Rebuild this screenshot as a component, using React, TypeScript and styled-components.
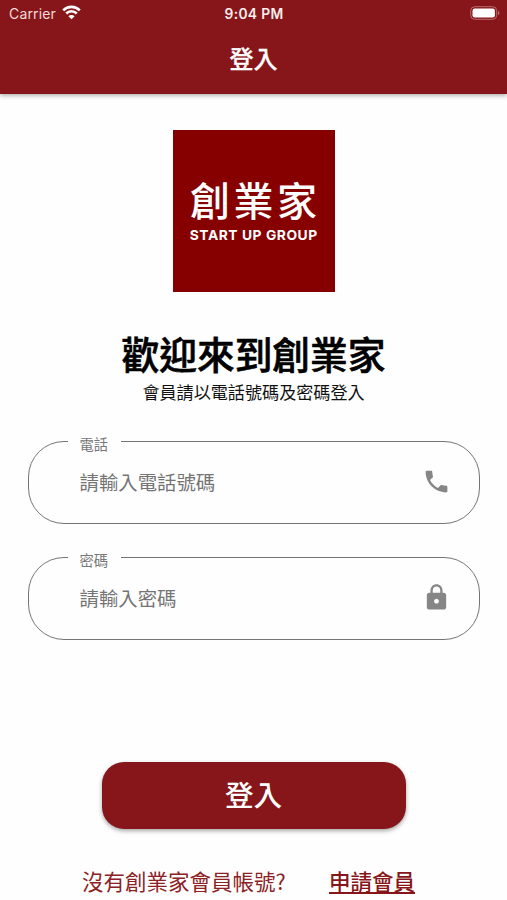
import React from "react";
import styled, { createGlobalStyle } from "styled-components";

const Global = createGlobalStyle`
  * { box-sizing: border-box; }
  body {
    margin: 0;
    background: #fff;
    font-family: Inter, "Noto Sans CJK TC", sans-serif;
  }
`;

const Screen = styled.div`
  display: flex;
  flex-direction: column;
  align-items: center;
  width: 507px;
  height: 900px;
  overflow: hidden;
  background: #fefefe;
`;

const Header = styled.header`
  width: 100%;
  height: 94px;
  flex: none;
  background: #861619;
  color: #fff;
  box-shadow: 0 1px 5px rgba(0, 0, 0, 0.4);
`;

const StatusBar = styled.div`
  display: grid;
  grid-template-columns: 1fr auto 1fr;
  align-items: center;
  height: 27px;
  padding: 0 7px 0 9px;
`;

const Carrier = styled.div`
  display: flex;
  align-items: center;
  gap: 6px;
  font-size: 14px;
  letter-spacing: 0.15px;
  color: #f3dcda;
`;

const Clock = styled.div`
  font-size: 13.8px;
  font-weight: 600;
  letter-spacing: 0.35px;
  margin-right: 1px;
  color: #fdeeee;
`;

const Battery = styled.svg`
  justify-self: end;
  margin-bottom: 1px;
`;

const Title = styled.h1`
  margin: 14px 0 0;
  text-align: center;
  font-size: 24px;
  line-height: 34px;
  font-weight: 500;
  -webkit-text-stroke: 0.3px #fff;
  font-family: "Noto Sans CJK TC", sans-serif;
`;

const Logo = styled.div`
  display: flex;
  flex-direction: column;
  align-items: center;
  width: 162px;
  height: 162px;
  margin-top: 35.5px;
  padding-top: 40.5px;
  flex: none;
  background: #870000;
  color: #fff;
`;

const LogoName = styled.div`
  font-family: "Noto Sans CJK TC", sans-serif;
  font-size: 40px;
  line-height: 58px;
  height: 57px;
  font-weight: 500;
  letter-spacing: 3.5px;
  margin-right: -3.5px;
`;

const LogoLatin = styled.div`
  font-family: Inter, sans-serif;
  font-size: 13.8px;
  line-height: 17px;
  font-weight: 700;
  letter-spacing: 0.55px;
  margin-right: -0.5px;
  white-space: nowrap;
`;

const Heading = styled.h2`
  margin: 34.5px 0 0;
  font-size: 37.7px;
  line-height: 54px;
  font-weight: 500;
  -webkit-text-stroke: 0.6px #000;
  font-family: "Noto Sans CJK TC", sans-serif;
  color: #000;
`;

const Subtitle = styled.p`
  margin: 1px 0 0;
  font-size: 17.1px;
  line-height: 22px;
  font-family: "Noto Sans CJK TC", sans-serif;
  color: #111;
`;

const Form = styled.form`
  display: flex;
  flex-direction: column;
  gap: 22px;
  width: 452px;
  margin-top: 27px;
`;

const Field = styled.fieldset`
  display: flex;
  min-width: 0;
  height: 94px;
  margin: 0;
  padding: 0 28px 0 51px;
  border: 1px solid #757575;
  border-radius: 36px;
`;

const Legend = styled.legend`
  height: 22px;
  margin-left: -12px;
  padding: 5px 12px 0;
  width: 53px;
  font-size: 14.3px;
  line-height: 17px;
  white-space: nowrap;
  font-family: "Noto Sans CJK TC", sans-serif;
  color: #777;
`;

const FieldRow = styled.div`
  display: flex;
  align-items: center;
  width: 100%;
  height: 40px;
  margin-top: 9px;
`;

const Input = styled.input`
  flex: 1;
  min-width: 0;
  height: 36px;
  padding: 0;
  border: 0;
  outline: 0;
  background: transparent;
  font-size: 19.4px;
  font-family: "Noto Sans CJK TC", sans-serif;
  color: #333;
  &::placeholder {
    color: #747474;
    opacity: 1;
  }
`;

const FieldIcon = styled.svg`
  flex: none;
  margin-top: 1px;
  fill: #868686;
`;

const Submit = styled.button`
  width: 304px;
  height: 67px;
  flex: none;
  margin-top: 122px;
  padding: 0 0 3px;
  border: 0;
  border-radius: 22px;
  background: #861619;
  color: #fff;
  font-family: "Noto Sans CJK TC", sans-serif;
  font-size: 28.6px;
  line-height: 40px;
  font-weight: 500;
  box-shadow: 0 2px 4px rgba(0, 0, 0, 0.35);
`;

const Footer = styled.div`
  display: flex;
  justify-content: space-between;
  width: 333px;
  margin: 36px 0 0 -10px;
  font-family: "Noto Sans CJK TC", sans-serif;
  font-size: 21.5px;
  line-height: 32px;
  color: #8c2225;
`;

const Apply = styled.a`
  font-weight: 500;
  color: #861619;
  text-decoration: underline;
  text-decoration-thickness: 1.5px;
  text-underline-offset: 2px;
`;

const WifiIcon = () => (
  <svg width="19" height="17" viewBox="0 0 19 17" fill="none" stroke="#fff" strokeWidth="2.6">
    <path d="M1.2 5.3a11.8 11.8 0 0 1 16.6 0" />
    <path d="M4.2 8.5a7.5 7.5 0 0 1 10.6 0" />
    <path d="M9.5 14.2 6.4 11.2a4.3 4.3 0 0 1 6.2 0Z" fill="#fff" stroke="none" />
  </svg>
);

const BatteryIcon = () => (
  <Battery width="30" height="14" viewBox="0 0 30 14">
    <rect x="0.7" y="0.7" width="26" height="12.6" rx="4" fill="none" stroke="#b66f70" />
    <rect x="2.5" y="2.5" width="22.4" height="9" rx="2.2" fill="#fff" />
    <path d="M28 4.8v4.4q1.5-.7 1.5-2.2T28 4.8Z" fill="#b66f70" />
  </Battery>
);

const PhoneIcon = () => (
  <FieldIcon width="29" height="29" viewBox="0 0 24 24">
    <path d="M6.62 10.79c1.44 2.83 3.76 5.14 6.59 6.59l2.2-2.2c.27-.27.67-.36 1.02-.24 1.12.37 2.33.57 3.57.57.55 0 1 .45 1 1V20c0 .55-.45 1-1 1-9.39 0-17-7.61-17-17 0-.55.45-1 1-1h3.5c.55 0 1 .45 1 1 0 1.25.2 2.45.57 3.57.11.35.03.74-.25 1.02l-2.2 2.2z" />
  </FieldIcon>
);

const LockIcon = () => (
  <FieldIcon width="29" height="29" viewBox="0 0 24 24">
    <path d="M18 8h-1V6c0-2.76-2.24-5-5-5S7 3.24 7 6v2H6c-1.1 0-2 .9-2 2v10c0 1.1.9 2 2 2h12c1.1 0 2-.9 2-2V10c0-1.1-.9-2-2-2zm-6 9c-1.1 0-2-.9-2-2s.9-2 2-2 2 .9 2 2-.9 2-2 2zm3.1-9H8.9V6c0-1.71 1.39-3.1 3.1-3.1s3.1 1.39 3.1 3.1v2z" />
  </FieldIcon>
);

export default function App() {
  return (
    <Screen lang="zh-Hant">
      <Global />
      <Header>
        <StatusBar>
          <Carrier>
            Carrier
            <WifiIcon />
          </Carrier>
          <Clock>9:04 PM</Clock>
          <BatteryIcon />
        </StatusBar>
        <Title>登入</Title>
      </Header>
      <Logo>
        <LogoName>創業家</LogoName>
        <LogoLatin>START UP GROUP</LogoLatin>
      </Logo>
      <Heading>歡迎來到創業家</Heading>
      <Subtitle>會員請以電話號碼及密碼登入</Subtitle>
      <Form>
        <Field>
          <Legend>電話</Legend>
          <FieldRow>
            <Input type="tel" placeholder="請輸入電話號碼" aria-label="電話" />
            <PhoneIcon />
          </FieldRow>
        </Field>
        <Field>
          <Legend>密碼</Legend>
          <FieldRow>
            <Input type="password" placeholder="請輸入密碼" aria-label="密碼" />
            <LockIcon />
          </FieldRow>
        </Field>
      </Form>
      <Submit type="button">登入</Submit>
      <Footer>
        <span>沒有創業家會員帳號?</span>
        <Apply>申請會員</Apply>
      </Footer>
    </Screen>
  );
}
